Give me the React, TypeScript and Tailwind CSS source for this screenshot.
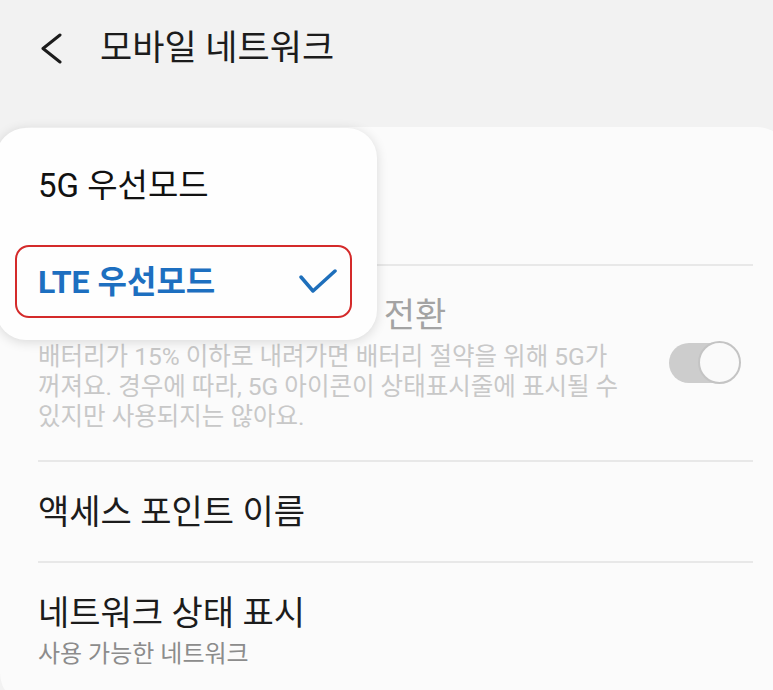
export default function App() {
  return (
    <div className="relative w-[773px] h-[690px] overflow-hidden bg-[#f2f2f2] [font-family:Roboto,'Noto_Sans_CJK_KR',sans-serif]">
      <div className="flex h-[96px] items-center">
        <svg className="ml-[40px] w-[24px] h-[32px]" viewBox="0 0 24 32">
          <path d="M20 3 L3 16.5 L20 30" stroke="#1c1c1c" strokeWidth="3" fill="none" strokeLinecap="round" strokeLinejoin="round" />
        </svg>
        <h1 className="ml-[36px] text-[35px] leading-none text-[#1c1c1c]">모바일 네트워크</h1>
      </div>

      <div className="mt-[31px] -mr-[16px] h-[578px] rounded-[32px] bg-[#fbfbfb] pl-[38px] pr-[36px]">
        <div className="h-[137px]" />
        <div className="h-[2px] bg-[#e8e8e8]" />
        <div className="flex h-[194px] items-center justify-between">
          <div className="flex flex-col">
            <div className="text-[34px] leading-[40px] text-[#a3a3a3] whitespace-nowrap">배터리 절약 시 LTE 자동 전환</div>
            <div className="mt-[7px] text-[24.5px] leading-[30px] text-[#c8c8c8] whitespace-nowrap">
              배터리가 15% 이하로 내려가면 배터리 절약을 위해 5G가
              <br />
              꺼져요. 경우에 따라, 5G 아이콘이 상태표시줄에 표시될 수
              <br />
              있지만 사용되지는 않아요.
            </div>
          </div>
          <div className="relative mr-[12px] h-[44px] w-[72px]">
            <div className="absolute left-0 top-[2px] h-[40px] w-[66px] rounded-full bg-[#cdcdcd]" />
            <div className="absolute right-0 top-0 h-[43px] w-[43px] rounded-full border-[2.5px] border-[#c4c4c4] bg-[#fafafa]" />
          </div>
        </div>
        <div className="h-[2px] bg-[#e8e8e8]" />
        <div className="flex h-[99px] items-center">
          <div className="text-[34px] leading-[40px] text-[#1c1c1c]">액세스 포인트 이름</div>
        </div>
        <div className="h-[2px] bg-[#e8e8e8]" />
        <div className="flex flex-col pt-[30px]">
          <div className="text-[34px] leading-[40px] text-[#1c1c1c]">네트워크 상태 표시</div>
          <div className="mt-[6px] text-[24px] leading-[30px] text-[#8c8c8c]">사용 가능한 네트워크</div>
        </div>
      </div>

      <div className="absolute left-[-4px] top-[128px] flex h-[212px] w-[381px] flex-col rounded-[30px] bg-[#fefefe] pt-[38px] shadow-[0_2px_12px_rgba(0,0,0,0.14)]">
        <div className="pl-[42px] text-[33px] leading-[40px] text-[#111111]">5G 우선모드</div>
        <div className="ml-[19px] mt-[39px] flex h-[73px] w-[337px] items-center justify-between rounded-[14px] border-2 border-[#d42a2a] pl-[21px] pr-[13px]">
          <span className="text-[32px] font-bold leading-[40px] text-[#1d6fc0]">LTE 우선모드</span>
          <svg className="h-[26px] w-[38px]" viewBox="0 0 38 26">
            <path d="M2 8 L14 22 L36 2" stroke="#1e6fbb" strokeWidth="3.5" fill="none" strokeLinecap="round" strokeLinejoin="round" />
          </svg>
        </div>
      </div>
    </div>
  );
}
